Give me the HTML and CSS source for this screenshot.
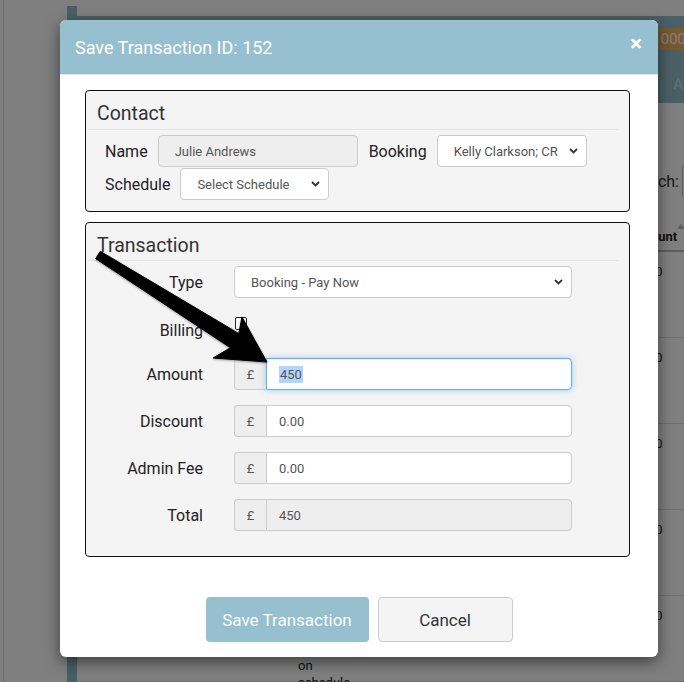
FILE: index.html
```html
<!DOCTYPE html>
<html>
<head>
<meta charset="utf-8">
<link rel="stylesheet" href="styles.css">
</head>
<body>
<div class="page">
  <div class="gutter"></div>
  <div class="strip"></div>
  <div class="main">
    <div class="topbar">
      <div class="badge-row"><span class="badge">£1000</span></div>
      <div class="tabs-row"><span class="tab">Actions</span></div>
    </div>
    <div class="search-row">
      <span class="search-label">Search:</span>
      <span class="search-input"></span>
    </div>
    <div class="table">
      <div class="trow thead">
        <div class="cell"></div>
        <div class="cell"></div>
        <div class="cell"></div>
        <div class="cell hcell">Amount<span class="sort"></span></div>
      </div>
      <div class="trow"><div class="cell"></div><div class="cell"></div><div class="cell"></div><div class="cell">£450</div></div>
      <div class="trow"><div class="cell"></div><div class="cell"></div><div class="cell"></div><div class="cell">£450</div></div>
      <div class="trow"><div class="cell"></div><div class="cell"></div><div class="cell"></div><div class="cell">£450</div></div>
      <div class="trow"><div class="cell"></div><div class="cell"></div><div class="cell"></div><div class="cell">£450</div></div>
      <div class="trow"><div class="cell"></div><div class="cell note">Instalment<br>payment<br>due<br>on<br>schedule</div><div class="cell"></div><div class="cell">£450</div></div>
    </div>
  </div>
</div>
<div class="backdrop"></div>

<div class="modal">
  <div class="modal-header">
    <span class="modal-title">Save Transaction ID: 152</span>
    <span class="close">×</span>
  </div>
  <div class="modal-body">
    <div class="fieldset contact">
      <div class="legend">Contact</div>
      <div class="crow">
        <span class="clabel">Name</span>
        <span class="ctrl disabled name-input">Julie Andrews</span>
        <span class="clabel booking-label">Booking</span>
        <span class="ctrl select booking-select"><span class="sel-text">Kelly Clarkson; CR</span><svg class="chev" width="9" height="6" viewBox="0 0 9 6"><polyline points="1,1 4.5,4.5 8,1" fill="none" stroke="#333" stroke-width="1.8"/></svg></span>
      </div>
      <div class="crow">
        <span class="clabel">Schedule</span>
        <span class="ctrl select schedule-select"><span class="sel-text">Select Schedule</span><svg class="chev" width="9" height="6" viewBox="0 0 9 6"><polyline points="1,1 4.5,4.5 8,1" fill="none" stroke="#333" stroke-width="1.8"/></svg></span>
      </div>
    </div>

    <div class="fieldset transaction">
      <div class="legend">Transaction</div>
      <div class="tform">
        <span class="tlabel">Type</span>
        <span class="ctrl select type-select"><span class="sel-text">Booking - Pay Now</span><svg class="chev" width="9" height="6" viewBox="0 0 9 6"><polyline points="1,1 4.5,4.5 8,1" fill="none" stroke="#333" stroke-width="1.8"/></svg></span>

        <span class="tlabel billing-label">Billing</span>
        <span class="billing-cell"><span class="checkbox"></span></span>

        <span class="tlabel">Amount</span>
        <span class="igroup"><span class="addon">£</span><span class="ival focus"><span class="selected">450</span></span></span>

        <span class="tlabel">Discount</span>
        <span class="igroup"><span class="addon">£</span><span class="ival">0.00</span></span>

        <span class="tlabel">Admin Fee</span>
        <span class="igroup"><span class="addon">£</span><span class="ival">0.00</span></span>

        <span class="tlabel">Total</span>
        <span class="igroup"><span class="addon">£</span><span class="ival disabled">450</span></span>
      </div>
    </div>

    <div class="footer">
      <span class="btn btn-save">Save Transaction</span>
      <span class="btn btn-cancel">Cancel</span>
    </div>
  </div>
</div>

<svg class="arrow" width="684" height="682" viewBox="0 0 684 682">
  <defs>
    <filter id="sh" x="-10%" y="-10%" width="120%" height="120%">
      <feDropShadow dx="0" dy="1" stdDeviation="1.2" flood-color="#000" flood-opacity="0.35"/>
    </filter>
  </defs>
  <polygon filter="url(#sh)" fill="#000" stroke="#000" stroke-width="1" stroke-linejoin="round"
    points="100.3,251.3 238.8,333.5 242,317 267,362 213,358 230.4,347.8 95.7,258.7"/>
</svg>
</body>
</html>
```

FILE: styles.css
```css
html, body {
  margin: 0;
  padding: 0;
}
body {
  width: 684px;
  height: 682px;
  overflow: hidden;
  position: relative;
  background: #fff;
  font-family: Roboto, "Noto Sans", "Liberation Sans", sans-serif;
  color: #222;
}

/* background page */
.page {
  display: flex;
  height: 682px;
}
.gutter {
  width: 63px;
  margin-left: 3px;
  border-left: 1px solid #dcdcdc;
}
.strip {
  width: 10px;
  margin-top: 6px;
  background: #94becc;
}
.main {
  flex: 1;
  min-width: 0;
  padding-top: 16px;
  display: flex;
  flex-direction: column;
}
.topbar {
  height: 89px;
  background: #94becc;
  display: flex;
  flex-direction: column;
}
.badge-row {
  display: flex;
  justify-content: flex-end;
  margin-top: 12px;
  margin-right: -10px;
}
.badge {
  background: #f2b35a;
  color: #fff;
  font-size: 15px;
  line-height: 22px;
  padding: 0 8px;
  border-radius: 3px;
}
.tabs-row {
  display: flex;
  justify-content: flex-end;
  margin-top: 25px;
  margin-right: -40px;
}
.tab {
  color: rgba(255,255,255,0.55);
  font-size: 15px;
}
.search-row {
  display: flex;
  justify-content: flex-end;
  align-items: center;
  margin-top: 62px;
  margin-right: -150px;
  height: 32px;
}
.search-label {
  font-size: 16px;
  color: #333;
  margin-right: 3px;
}
.search-input {
  width: 150px;
  height: 30px;
  border: 1px solid #bbb;
  border-radius: 3px;
  background: #fff;
}
.table {
  margin-top: 23px;
  font-size: 13px;
  color: #222;
}
.trow {
  display: grid;
  grid-template-columns: 219px 80px 257px 200px;
  height: 85px;
  border-bottom: 1px solid #ddd;
}
.trow .cell {
  padding-top: 11px;
  line-height: 17px;
}
.trow.thead {
  height: 30px;
  border-bottom: 2px solid #bbb;
}
.trow.thead .cell:last-child {
  margin-left: -5px;
}
.hcell {
  position: relative;
  font-weight: bold;
  padding-left: 3px;
  padding-top: 8px !important;
}
.sort {
  position: absolute;
  left: 49px;
  top: 4px;
  width: 0;
  height: 0;
  border-left: 4px solid transparent;
  border-right: 4px solid transparent;
  border-bottom: 5px solid #bbb;
}
.note {
  padding-top: 10px !important;
  padding-left: 2px;
}

.backdrop {
  position: absolute;
  left: 0;
  top: 0;
  width: 684px;
  height: 682px;
  background: rgba(0,0,0,0.5);
}

/* modal */
.modal {
  position: absolute;
  left: 60px;
  top: 20px;
  width: 598px;
  height: 637px;
  background: #fff;
  border-radius: 6px;
  box-shadow: 0 5px 15px rgba(0,0,0,0.5);
  overflow: hidden;
}
.modal-header {
  height: 54px;
  background: #96bfcf;
  border-bottom: 1px solid #e5e5e5;
  display: flex;
  align-items: center;
  justify-content: space-between;
  padding: 0 15px;
}
.modal-title {
  color: #fff;
  font-size: 18px;
  line-height: 20px;
  margin-top: 1px;
}
.close {
  color: #fff;
  font-size: 22px;
  font-weight: bold;
  line-height: 20px;
  margin-right: 1px;
  margin-top: -7px;
}
.modal-body {
  padding: 15px 28px 0 25px;
}
.fieldset {
  border: 1px solid #111;
  border-radius: 4px;
  background: #f4f4f4;
}
.legend {
  font-size: 19.5px;
  line-height: 22px;
  color: #333;
  padding: 12px 0 4px 9px;
  margin: 0 11px 0 2px;
  border-bottom: 1px solid #e3e3e3;
}
.contact {
  padding-bottom: 11px;
}
.crow {
  display: flex;
  align-items: center;
  padding-left: 19px;
  margin-top: 5px;
}
.crow + .crow {
  margin-top: 1px;
}
.clabel {
  font-size: 16px;
  margin-right: 10px;
  color: #222;
}
.booking-label {
  margin-left: 11px;
}
.ctrl {
  box-sizing: border-box;
  height: 32px;
  border: 1px solid #ccc;
  border-radius: 4px;
  background: #fff;
  font-size: 13px;
  color: #555;
  display: flex;
  align-items: center;
  padding-left: 16px;
  white-space: nowrap;
  overflow: hidden;
}
.ctrl.disabled {
  background: #eee;
}
.name-input {
  width: 200px;
}
.select {
  justify-content: space-between;
  padding-right: 8px;
}
.sel-text {
  overflow: hidden;
}
.chev {
  flex: none;
}
.booking-select {
  width: 150px;
}
.schedule-select {
  width: 149px;
}
.transaction {
  margin-top: 10px;
  padding-bottom: 25px;
}
.transaction .legend {
  padding-bottom: 3px;
}
.tform {
  display: grid;
  grid-template-columns: 117px 338px;
  column-gap: 31px;
  row-gap: 15px;
  margin-top: 5px;
  align-items: center;
}
.tlabel {
  text-align: right;
  font-size: 16px;
  color: #222;
}
.type-select {
  width: 338px;
}
.billing-label {
  align-self: start;
  padding-top: 8px;
  line-height: 20px;
}
.billing-cell {
  height: 30px;
  display: flex;
  align-items: flex-start;
}
.checkbox {
  box-sizing: border-box;
  width: 12px;
  height: 13px;
  margin-top: 4px;
  margin-left: 1px;
  border: 1px solid #222;
  border-radius: 2px;
  background: #fff;
}
.igroup {
  display: flex;
  height: 32px;
}
.addon {
  box-sizing: border-box;
  width: 32px;
  border: 1px solid #ccc;
  border-right: none;
  border-radius: 4px 0 0 4px;
  background: #eee;
  color: #555;
  font-size: 13px;
  display: flex;
  align-items: center;
  justify-content: center;
}
.ival {
  box-sizing: border-box;
  flex: 1;
  border: 1px solid #ccc;
  border-radius: 0 4px 4px 0;
  background: #fff;
  color: #555;
  font-size: 13px;
  display: flex;
  align-items: center;
  padding-left: 12px;
}
.ival.disabled {
  background: #eee;
}
.ival.focus {
  border-color: #66afe9;
  box-shadow: inset 0 1px 1px rgba(0,0,0,0.075), 0 0 6px rgba(102,175,233,0.6);
}
.selected {
  background: #b3d4fc;
  line-height: 17px;
  padding: 0 1px;
}
.footer {
  display: flex;
  justify-content: center;
  gap: 9px;
  margin-top: 40px;
  margin-right: -3px;
}
.btn {
  box-sizing: border-box;
  height: 45px;
  border-radius: 4px;
  font-size: 17px;
  display: flex;
  align-items: center;
  justify-content: center;
}
.btn-save {
  width: 163px;
  background: #96bfcf;
  color: #fbfdfe;
}
.btn-cancel {
  width: 135px;
  background: #f4f4f4;
  border: 1px solid #ccc;
  color: #333;
}

.arrow {
  position: absolute;
  left: 0;
  top: 0;
  pointer-events: none;
}
```
